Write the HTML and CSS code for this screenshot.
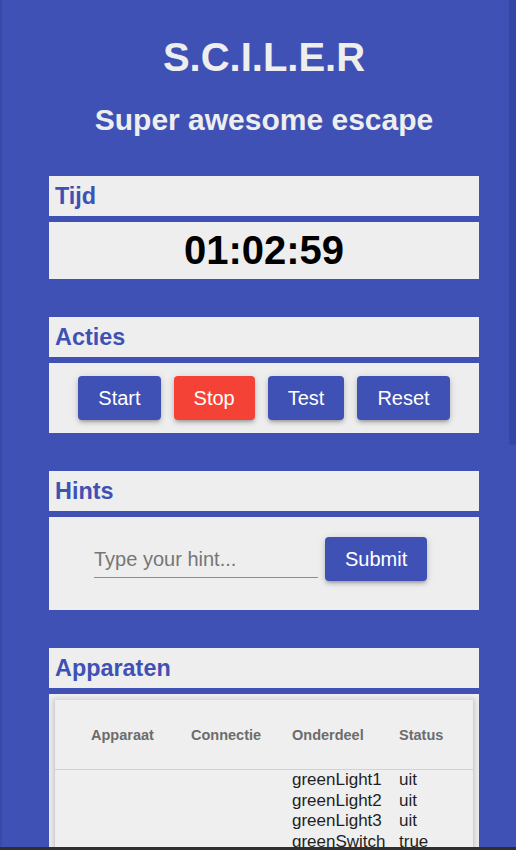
FILE: index.html
```html
<!DOCTYPE html>
<html lang="nl">
<head>
<meta charset="utf-8">
<title>S.C.I.L.E.R</title>
<link rel="stylesheet" href="styles.css">
</head>
<body>
<div class="page">
  <h1 class="title">S.C.I.L.E.R</h1>
  <h2 class="subtitle">Super awesome escape</h2>

  <section class="section">
    <div class="panel-head"><h3>Tijd</h3></div>
    <div class="panel-body timer">01:02:59</div>
  </section>

  <section class="section">
    <div class="panel-head"><h3>Acties</h3></div>
    <div class="panel-body actions">
      <button class="btn">Start</button>
      <button class="btn btn-red">Stop</button>
      <button class="btn">Test</button>
      <button class="btn">Reset</button>
    </div>
  </section>

  <section class="section">
    <div class="panel-head"><h3>Hints</h3></div>
    <div class="panel-body hints">
      <input class="hint-input" type="text" placeholder="Type your hint...">
      <button class="btn">Submit</button>
    </div>
  </section>

  <section class="section">
    <div class="panel-head"><h3>Apparaten</h3></div>
    <div class="panel-body devices">
      <div class="card">
        <div class="table">
          <div class="th first">Apparaat</div>
          <div class="th">Connectie</div>
          <div class="th">Onderdeel</div>
          <div class="th">Status</div>

          <div class="td first mid">controlBoard</div>
          <div class="td mid">true</div>
          <div class="td list">
            <span>greenLight1</span><span>greenLight2</span><span>greenLight3</span><span>greenSwitch</span>
            <span>redLight1</span><span>redLight2</span><span>redLight3</span><span>redSwitch</span>
            <span>orangeLight1</span><span>orangeLight2</span><span>orangeSwitch</span>
          </div>
          <div class="td list">
            <span>uit</span><span>uit</span><span>uit</span><span>true</span>
            <span>uit</span><span>uit</span><span>uit</span><span>false</span>
            <span>uit</span><span>uit</span><span>false</span>
          </div>
        </div>
      </div>
    </div>
  </section>
</div>
<div class="scroll-thumb"></div>
<div class="bottom-bar"></div>
</body>
</html>
```
FILE: styles.css
```css
html, body {
  margin: 0;
  padding: 0;
  height: 850px;
  overflow: hidden;
}
body {
  background: #3f51b5;
  font-family: "Liberation Sans", Arial, sans-serif;
  border-left: 2px solid #394aa8;
  box-sizing: border-box;
}
.page {
  width: 430px;
  padding: 34px 0 0 47px;
}
.title {
  margin: 0;
  font-size: 40px;
  line-height: 46px;
  font-weight: bold;
  color: #eeeeee;
  text-align: center;
}
.subtitle {
  margin: 22px 0 0;
  font-size: 30px;
  line-height: 35px;
  font-weight: bold;
  color: #eeeeee;
  text-align: center;
}
.section {
  margin-top: 39px;
}
.section + .section {
  margin-top: 38px;
}
.panel-head {
  height: 40px;
  background: #eeeeee;
  display: flex;
  align-items: center;
  padding-left: 6px;
}
.panel-head h3 {
  margin: 0;
  font-size: 23.4px;
  line-height: 27px;
  color: #3f51b5;
  font-weight: bold;
}
.panel-body {
  margin-top: 6px;
  background: #eeeeee;
}
.timer {
  height: 57px;
  display: flex;
  align-items: center;
  justify-content: center;
  font-size: 40px;
  font-weight: bold;
  color: #000;
}
.actions {
  height: 70px;
  display: flex;
  align-items: center;
  justify-content: center;
  gap: 13px;
}
.btn {
  height: 44px;
  padding: 0 20px;
  border: none;
  border-radius: 4px;
  background: #3f51b5;
  color: #ffffff;
  font-family: "Liberation Sans", Arial, sans-serif;
  font-size: 20px;
  box-shadow: 0 3px 3px -2px rgba(0,0,0,.2), 0 3px 4px 0 rgba(0,0,0,.14), 0 1px 8px 0 rgba(0,0,0,.12);
}
.btn-red {
  background: #f44336;
}
.hints {
  height: 93px;
  box-sizing: border-box;
  display: flex;
  align-items: flex-start;
  padding: 20px 0 0 45px;
}
.hint-input {
  width: 224px;
  height: 41px;
  box-sizing: border-box;
  margin: 0 7px 0 0;
  padding: 5px 0 0;
  border: none;
  border-bottom: 1px solid #8c8c8c;
  background: transparent;
  font-family: "Liberation Sans", Arial, sans-serif;
  font-size: 20px;
  color: #222;
  outline: none;
}
.hint-input::placeholder {
  color: #767676;
}
.devices {
  padding: 6px;
  height: 400px;
}
.card {
  background: #efefef;
  box-shadow: 0 2px 1px -1px rgba(0,0,0,.2), 0 1px 1px 0 rgba(0,0,0,.14), 0 1px 5px 2px rgba(0,0,0,.14);
  height: 100%;
}
.table {
  display: grid;
  grid-template-columns: 136px 101px 107px 1fr;
}
.th {
  height: 69px;
  display: flex;
  align-items: center;
  border-bottom: 1px solid #d2d2d2;
  font-size: 14.5px;
  font-weight: bold;
  color: #6c6c6c;
}
.first {
  padding-left: 36px;
}
.td {
  font-size: 17px;
  line-height: 20.5px;
  color: #1f1f1f;
}
.mid {
  display: flex;
  align-items: center;
}
.list {
  display: flex;
  flex-direction: column;
}
.scroll-thumb {
  position: fixed;
  top: 0;
  right: 0;
  width: 7px;
  height: 445px;
  background: #3546a4;
  border-radius: 0 0 3px 3px;
}
.bottom-bar {
  position: fixed;
  left: 0;
  right: 0;
  bottom: 0;
  height: 3px;
  background: #2f2f2f;
}
```
